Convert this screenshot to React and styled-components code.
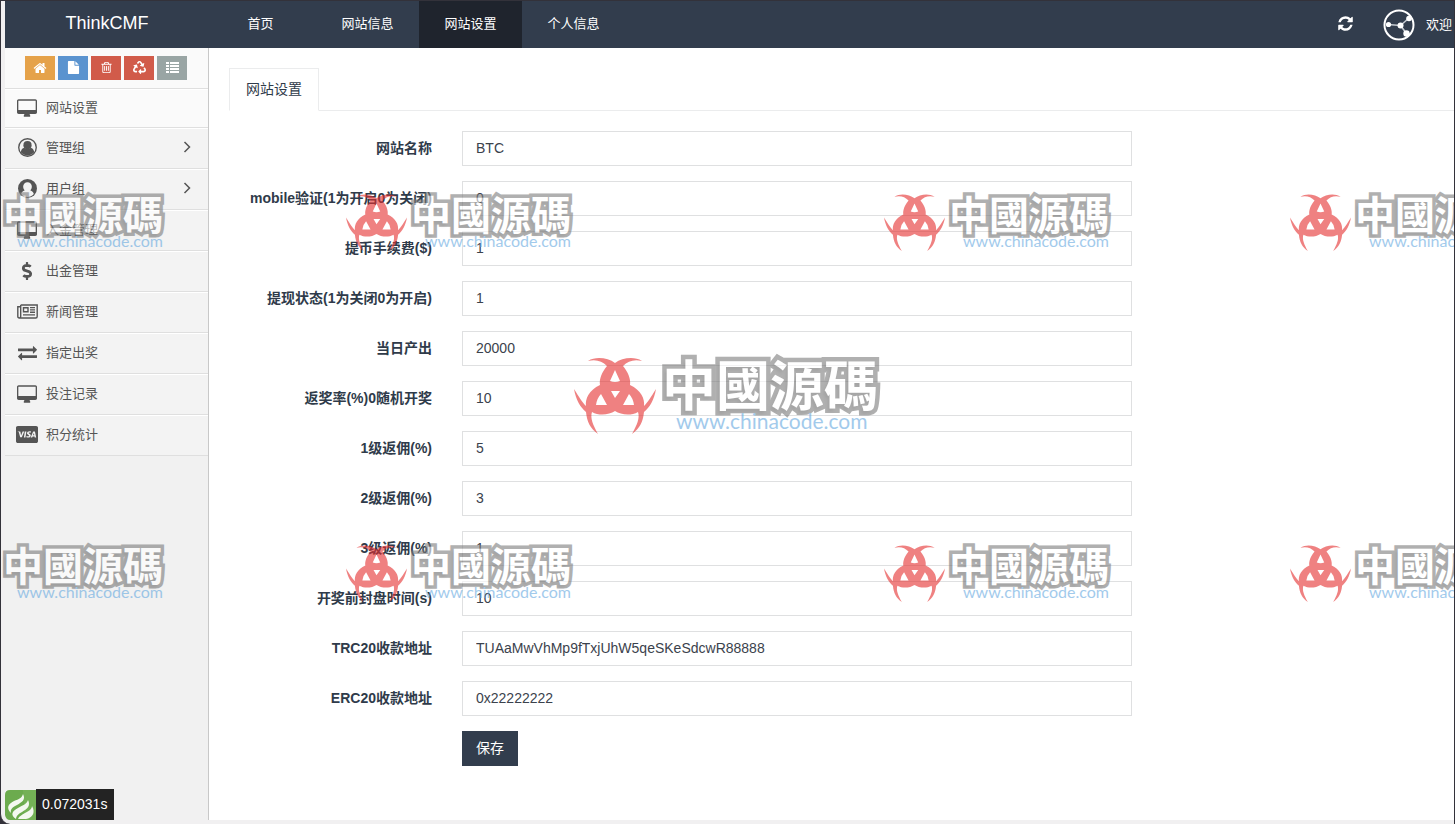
import React from 'react';
import styled, { createGlobalStyle, css } from 'styled-components';
import { FaCcVisa, FaDollarSign, FaRecycle } from 'react-icons/fa';

const GlobalStyle = createGlobalStyle`
    * {
        box-sizing: border-box;
    }
    body {
        margin: 0;
        font-family: 'Liberation Sans', 'Noto Sans CJK SC', sans-serif;
        font-size: 14px;
        color: #2f3b4a;
        background: #33323a;
    }
    a {
        color: inherit;
        text-decoration: none;
    }
    ul {
        margin: 0;
        padding: 0;
        list-style: none;
    }
`;

const Frame = styled.div`
    position: relative;
    display: flex;
    flex-direction: column;
    min-height: 100vh;
    padding: 0 0 4px 4px;
    border: solid #33323a;
    border-width: 1px 1px 0 1px;
    border-bottom-left-radius: 10px;
    background: #f1f0f1;
    overflow: hidden;
`;
const Header = styled.header`
    display: flex;
    height: 47px;
    line-height: 46px;
    font-size: 13px;
    color: #fff;
    background: #323d4d;
`;
const Brand = styled.a`
    width: 204px;
    flex: none;
    font-size: 18px;
    line-height: 45px;
    text-align: center;
`;
const NavLink = styled.a`
    min-width: 103px;
    text-align: center;
    background: ${p => (p.$active ? '#1f242d' : 'transparent')};
    &:first-child {
        margin-right: 4px;
    }
`;
const Nav = styled.nav`
    display: flex;
    flex: 1;
`;
const UserBar = styled.div`
    display: flex;
    align-items: center;
    gap: 11px;
    padding-right: 2px;
    white-space: nowrap;
`;
const RefreshButton = styled.button`
    display: flex;
    margin-right: 18px;
    padding: 0 0 2px;
    border: 0;
    color: #fff;
    background: none;
    cursor: pointer;
`;
const Body = styled.div`
    display: flex;
    flex: 1;
`;
const Sidebar = styled.aside`
    width: 204px;
    flex: none;
    border-right: 1px solid #c8c8c8;
    background: #f1f1f1;
`;
const Shortcuts = styled.div`
    display: flex;
    gap: 3px;
    height: 40px;
    padding: 8px 0 0 20px;
    background: #fafafa;
`;
const Shortcut = styled.button`
    display: flex;
    align-items: center;
    justify-content: center;
    width: 30px;
    height: 24px;
    padding: 0 0 1px;
    border: 0;
    color: #fff;
    background: ${p => p.$color};
    cursor: pointer;
`;
const MenuItem = styled.li`
    border-top: 1px solid #dfdfdf;
    &:last-child {
        border-bottom: 1px solid #dfdfdf;
    }
`;
const MenuLink = styled.a`
    display: flex;
    align-items: center;
    gap: 8px;
    height: ${p => (p.$active ? '38px' : '40px')};
    padding: 0 17px 4px 11px;
    border-top: 1px solid #fff;
    font-size: 13px;
    color: #555;
    background: ${p => (p.$active ? '#fafafa' : '#f3f3f3')};
    span {
        flex: 1;
    }
`;
const IconSlot = styled.i`
    display: flex;
    justify-content: center;
    width: 22px;
    padding-top: 2px;
`;
const Content = styled.main`
    flex: 1;
    padding: 20px 0 20px 20px;
    background: #fff;
`;
const Tabs = styled.div`
    display: flex;
    height: 43px;
    border-bottom: 1px solid #ebeced;
`;
const Tab = styled.a`
    height: 43px;
    padding: 0 16px;
    line-height: 41px;
    border: 1px solid #ebeced;
    border-bottom-color: #fff;
    background: #fff;
`;
const Form = styled.form`
    display: flex;
    flex-direction: column;
    gap: 15px;
    padding-top: 20px;
`;
const Row = styled.div`
    display: grid;
    grid-template-columns: minmax(0, 203fr) minmax(0, 670fr) minmax(0, 292fr);
    gap: 30px;
    align-items: center;
`;
const Label = styled.label`
    padding-bottom: 4px;
    font-weight: bold;
    text-align: right;
    white-space: nowrap;
`;
const Input = styled.input`
    width: 100%;
    height: 35px;
    padding: 0 13px 1px;
    border: 1px solid #dfe0e1;
    border-radius: 0;
    font: inherit;
    color: #3b424c;
    background: #fff;
    outline: none;
`;
const SaveButton = styled.button`
    grid-column: 2;
    justify-self: start;
    height: 35px;
    padding: 0 14px 4px;
    border: 0;
    font: inherit;
    color: #fff;
    background: #323d4d;
    cursor: pointer;
`;
const Trace = styled.div`
    position: absolute;
    left: 4px;
    bottom: 4px;
    display: flex;
    height: 31px;
    line-height: 31px;
`;
const TraceTime = styled.div`
    padding: 0 7px 0 6px;
    color: #fff;
    background: #232323;
`;
const Overlay = styled.div`
    position: absolute;
    inset: 0;
    overflow: hidden;
    pointer-events: none;
`;
const stampSmall = css`
    gap: 4px;
    --mark: 61px;
    --title: 40px;
    --link: 16px;
    --line: 40px;
    --stroke: 7px;
`;
const stampLarge = css`
    gap: 6px;
    --mark: 82px;
    --title: 54px;
    --link: 21px;
    --line: 54px;
    --stroke: 9px;
`;
const StampBox = styled.div`
    position: absolute;
    left: ${p => p.$left}px;
    top: ${p => p.$top}px;
    display: flex;
    opacity: 0.6;
    white-space: nowrap;
    ${p => (p.$large ? stampLarge : stampSmall)}
    svg {
        width: var(--mark);
        height: var(--mark);
        flex: none;
    }
`;
const StampTitle = styled.div`
    font-family: 'Noto Sans CJK TC', sans-serif;
    font-size: var(--title);
    font-weight: bold;
    line-height: var(--line);
    color: #fff;
    -webkit-text-stroke: var(--stroke) #7c7c7c;
    paint-order: stroke fill;
    stroke-linejoin: round;
    text-shadow: -2px 3px 3px rgba(0, 0, 0, 0.15);
`;
const StampLink = styled.div`
    padding-left: 14px;
    font-family: Lato, sans-serif;
    font-size: var(--link);
    line-height: 1;
    color: #65a8df;
`;

const Glyph = ({ d, size = 14, box = '0 0 1792 1792' }) => (
    <svg width={size} height={size} viewBox={box} fill='currentColor'>
        <path d={d} />
    </svg>
);

const HomeIcon = () => (
    <Glyph d='M1472 992v480q0 26-19 45t-45 19h-384v-384h-256v384h-384q-26 0-45-19t-19-45v-480q0-1 .5-3t.5-3l575-474 575 474q1 2 1 6zm223-69l-62 74q-8 9-21 11h-3q-13 0-21-7l-692-577-692 577q-12 8-24 7-13-2-21-11l-62-74q-8-10-7-23.5t11-21.5l719-599q32-26 76-26t76 26l244 204v-195q0-14 9-23t23-9h192q14 0 23 9t9 23v408l219 182q10 8 11 21.5t-7 23.5z' />
);
const FileIcon = () => (
    <Glyph size={13} d='M1152 512v-472q22 14 36 28l408 408q14 14 28 36h-472zm-128 32q0 40 28 68t68 28h544v1056q0 40-28 68t-68 28h-1344q-40 0-68-28t-28-68v-1600q0-40 28-68t68-28h800v544z' />
);
const TrashIcon = () => (
    <Glyph size={13} d='M704 736v576q0 14-9 23t-23 9h-64q-14 0-23-9t-9-23v-576q0-14 9-23t23-9h64q14 0 23 9t9 23zm256 0v576q0 14-9 23t-23 9h-64q-14 0-23-9t-9-23v-576q0-14 9-23t23-9h64q14 0 23 9t9 23zm256 0v576q0 14-9 23t-23 9h-64q-14 0-23-9t-9-23v-576q0-14 9-23t23-9h64q14 0 23 9t9 23zm128 724v-948h-896v948q0 22 7 40.5t14.5 27 10.5 8.5h832q3 0 10.5-8.5t14.5-27 7-40.5zm-672-1076h448l-48-117q-7-9-17-11h-317q-10 2-17 11zm928 32v64q0 14-9 23t-23 9h-96v948q0 83-47 143.5t-113 60.5h-832q-66 0-113-58.5t-47-141.5v-952h-96q-14 0-23-9t-9-23v-64q0-14 9-23t23-9h309l70-167q15-37 54-63t79-26h320q40 0 79 26t54 63l70 167h309q14 0 23 9t9 23z' />
);
const ListIcon = () => (
    <svg width='13' height='11' viewBox='0 0 13 11' fill='currentColor'>
        <path d='M0 0h3v2H0zM4 0h9v2H4zM0 3h3v2H0zM4 3h9v2H4zM0 6h3v2H0zM4 6h9v2H4zM0 9h3v2H0zM4 9h9v2H4z' />
    </svg>
);
const RefreshIcon = () => (
    <Glyph size={17} d='M1639 1056q0 5-1 7-64 268-268 434.5t-478 166.5q-146 0-282.5-55t-243.5-157l-129 129q-19 19-45 19t-45-19-19-45v-448q0-26 19-45t45-19h448q26 0 45 19t19 45-19 45l-137 137q71 66 161 102t187 36q134 0 250-65t186-179q11-17 53-117 8-23 30-23h192q13 0 22.5 9.5t9.5 22.5zm25-800v448q0 26-19 45t-45 19h-448q-26 0-45-19t-19-45 19-45l138-138q-148-137-349-137-134 0-250 65t-186 179q-11 17-53 117-8 23-30 23h-199q-13 0-22.5-9.5t-9.5-22.5v-7q65-268 270-434.5t480-166.5q146 0 284 55.5t245 156.5l130-129q19-19 45-19t45 19 19 45z' />
);
const DesktopIcon = () => (
    <Glyph
        size={20}
        box='-64 -128 1920 1920'
        d='M1728 992v-832q0-13-9.5-22.5t-22.5-9.5h-1600q-13 0-22.5 9.5t-9.5 22.5v832q0 13 9.5 22.5t22.5 9.5h1600q13 0 22.5-9.5t9.5-22.5zm128-832v1088q0 66-47 113t-113 47h-544q0 37 16 77.5t32 71 16 43.5q0 26-19 45t-45 19h-512q-26 0-45-19t-19-45q0-14 16-44t32-70 16-78h-544q-66 0-113-47t-47-113v-1088q0-66 47-113t113-47h1600q66 0 113 47t47 113z'
    />
);
const ExchangeIcon = () => (
    <Glyph size={19} d='M1792 1184v192q0 13-9.5 22.5t-22.5 9.5h-1376v192q0 13-9.5 22.5t-22.5 9.5q-12 0-24-10l-319-320q-9-9-9-22 0-14 9-23l320-320q9-9 23-9 13 0 22.5 9.5t9.5 22.5v192h1376q13 0 22.5 9.5t9.5 22.5zm0-544q0 14-9 23l-320 320q-9 9-23 9-13 0-22.5-9.5t-9.5-22.5v-192h-1376q-13 0-22.5-9.5t-9.5-22.5v-192q0-13 9.5-22.5t22.5-9.5h1376v-192q0-14 9-23t23-9q12 0 24 10l319 319q9 9 9 23z' />
);
const AdminIcon = () => (
    <svg width='19' height='19' viewBox='0 0 18 18' fill='currentColor'>
        <circle cx='9' cy='9' r='8.3' fill='none' stroke='currentColor' strokeWidth='1.3' />
        <circle cx='9' cy='6.8' r='3.9' />
        <path d='M2.600 13.600c.4-2.800 1.700-4.200 3.300-4.400 1.900 1.700 4.300 1.700 6.200 0 1.600.2 2.900 1.600 3.300 4.400-3 3.900-9.800 3.900-12.800 0z' />
    </svg>
);
const MemberIcon = () => (
    <svg width='19' height='19' viewBox='0 0 18 18'>
        <circle cx='9' cy='9' r='9' fill='currentColor' />
        <path
            d='M9 3a4.100 4.100 0 0 1 4.100 4.200c0 1.500-.6 2.800-1.400 3.600 1.700.3 2.900 1.600 3.300 3.400-3 3.700-9 3.700-12 0 .4-1.800 1.600-3.100 3.300-3.400-.8-.8-1.400-2.100-1.400-3.600A4.100 4.100 0 0 1 9 3z'
            fill='#f3f3f3'
        />
    </svg>
);
const NewsIcon = () => (
    <svg width='21' height='15' viewBox='0 0 21 15' fill='none' stroke='currentColor' strokeWidth='1.400'>
        <path d='M3.700 1h16.500v11.500q0 1.500-1.500 1.500H2.300Q.8 14 .8 12.500V2.800h2.900M3.700 1v11.500q0 1.500-1.400 1.500' />
        <path d='M6.500 3.800h4.500v4H6.500zM13 3.600h5M13 5.900h5M13 8.200h5M6 10.900h12' />
    </svg>
);
const AngleIcon = () => (
    <svg width='8' height='12' viewBox='0 0 8 12' fill='none' stroke='currentColor' strokeWidth='1.500'>
        <path d='M1.500 1l5 5-5 5' />
    </svg>
);
const Avatar = () => (
    <svg width='32' height='32' viewBox='0 0 32 32' fill='#fff'>
        <circle cx='16' cy='16' r='14.500' fill='none' stroke='#fff' strokeWidth='2' />
        <path d='M5 15.500l12.500 1L26 9M17.500 16.500l6 8' fill='none' stroke='#c5cad0' strokeWidth='1.600' />
        <circle cx='5.500' cy='15.500' r='2.600' />
        <circle cx='17.500' cy='16.500' r='3' />
        <circle cx='26' cy='9.500' r='2.800' />
        <circle cx='23.500' cy='24.500' r='3.200' />
    </svg>
);
const TraceLogo = () => (
    <svg width='31' height='31' viewBox='0 0 31 31'>
        <path d='M5 1h26v30H5q-4 0-5-5V6q0-5 5-5z' fill='#6cab4e' />
        <path d='M18 1h13v30H20z' fill='#7ab65b' opacity='.6' />
        <g fill='#f4f8f0'>
            <path d='M18 5c3 6-1 8-6 11-4 2-7 4-6 8-5-5-3-9 3-12 5-2 8-3 9-7z' />
            <path d='M23 11c3 6-1 9-6 12-4 2-6 4-6 7-6-4-4-8 2-11 5-3 9-4 10-8z' />
            <path d='M27 17c4 7 0 12-6 13h-8c1-3 4-4 7-6 4-2 7-4 7-7z' />
        </g>
    </svg>
);
const StampMark = () => (
    <svg viewBox='0 0 82 82' fill='#e52f2f'>
        <path d='M14 5c8-5 20-3 27 2 7-5 19-7 27-2-8-2-14 0-19 5 5 6 8 13 7 19 11 5 15 14 14 21 4-4 7-9 12-17-2 11-6 18-12 23-1 10-4 16-12 22 5-9 8-16 6-22-7 4-17 3-23-1-6 4-16 5-23 1-2 6 1 13 6 22-8-6-11-12-12-22C6 51 2 44 0 33c5 8 8 13 12 17-1-7 3-16 14-21-1-6 2-13 7-19-5-5-11-7-19-5z' />
        <path d='M41 14l5 11q-5 2-10 0zM37 35h9l-5 7zM27 38l6 11H22q1-7 5-11zM55 38q4 4 5 11H49z' fill='#fff' />
    </svg>
);

const Stamp = ({ left, top, large }) => (
    <StampBox $left={left} $top={top} $large={large}>
        <StampMark />
        <div>
            <StampTitle>中國源碼</StampTitle>
            <StampLink>www.chinacode.com</StampLink>
        </div>
    </StampBox>
);

const shortcuts = [
    { name: '首页', color: '#e5a24a', icon: <HomeIcon /> },
    { name: '文件', color: '#5a93cf', icon: <FileIcon /> },
    { name: '删除', color: '#d15b4a', icon: <TrashIcon /> },
    { name: '回收站', color: '#d15b4a', icon: <FaRecycle size={13} /> },
    { name: '列表', color: '#99a5a4', icon: <ListIcon /> },
];

const menus = [
    { name: '网站设置', icon: <DesktopIcon />, active: true },
    { name: '管理组', icon: <AdminIcon />, sub: true },
    { name: '用户组', icon: <MemberIcon />, sub: true },
    { name: '入金管理', icon: <DesktopIcon /> },
    { name: '出金管理', icon: <FaDollarSign size={18} /> },
    { name: '新闻管理', icon: <NewsIcon /> },
    { name: '指定出奖', icon: <ExchangeIcon /> },
    { name: '投注记录', icon: <DesktopIcon /> },
    { name: '积分统计', icon: <FaCcVisa size={23} /> },
];

const fields = [
    ['site_name', '网站名称', 'BTC'],
    ['mobile', 'mobile验证(1为开启0为关闭)', '0'],
    ['fee', '提币手续费($)', '1'],
    ['withdraw', '提现状态(1为关闭0为开启)', '1'],
    ['output', '当日产出', '20000'],
    ['rate', '返奖率(%)0随机开奖', '10'],
    ['level1', '1级返佣(%)', '5'],
    ['level2', '2级返佣(%)', '3'],
    ['level3', '3级返佣(%)', '1'],
    ['close_time', '开奖前封盘时间(s)', '10'],
    ['trc20', 'TRC20收款地址', 'TUAaMwVhMp9fTxjUhW5qeSKeSdcwR88888'],
    ['erc20', 'ERC20收款地址', '0x22222222'],
];

export default function App() {
    return (
        <Frame>
            <GlobalStyle />
            <Header>
                <Brand href='#'>ThinkCMF</Brand>
                <Nav>
                    <NavLink href='#home'>首页</NavLink>
                    <NavLink href='#info'>网站信息</NavLink>
                    <NavLink href='#setting' $active>网站设置</NavLink>
                    <NavLink href='#profile'>个人信息</NavLink>
                </Nav>
                <UserBar>
                    <RefreshButton type='button' aria-label='刷新'>
                        <RefreshIcon />
                    </RefreshButton>
                    <Avatar />
                    <span>欢迎</span>
                </UserBar>
            </Header>
            <Body>
                <Sidebar>
                    <Shortcuts>
                        {shortcuts.map(s => (
                            <Shortcut key={s.name} type='button' aria-label={s.name} $color={s.color}>
                                {s.icon}
                            </Shortcut>
                        ))}
                    </Shortcuts>
                    <ul>
                        {menus.map(m => (
                            <MenuItem key={m.name}>
                                <MenuLink href='#' $active={m.active}>
                                    <IconSlot>{m.icon}</IconSlot>
                                    <span>{m.name}</span>
                                    {m.sub && <AngleIcon />}
                                </MenuLink>
                            </MenuItem>
                        ))}
                    </ul>
                </Sidebar>
                <Content>
                    <Tabs>
                        <Tab href='#setting'>网站设置</Tab>
                    </Tabs>
                    <Form onSubmit={e => e.preventDefault()}>
                        {fields.map(([id, label, value]) => (
                            <Row key={id}>
                                <Label htmlFor={id}>{label}</Label>
                                <Input id={id} name={id} type='text' defaultValue={value} />
                            </Row>
                        ))}
                        <Row>
                            <SaveButton type='submit'>保存</SaveButton>
                        </Row>
                    </Form>
                </Content>
            </Body>
            <Trace>
                <TraceLogo />
                <TraceTime>0.072031s</TraceTime>
            </Trace>
            <Overlay>
                {[192, 543].map(top =>
                    [-63, 345, 883, 1289].map(left => (
                        <Stamp key={`${left}-${top}`} left={left} top={top} />
                    ))
                )}
                <Stamp left={573} top={355} large />
            </Overlay>
        </Frame>
    );
}
